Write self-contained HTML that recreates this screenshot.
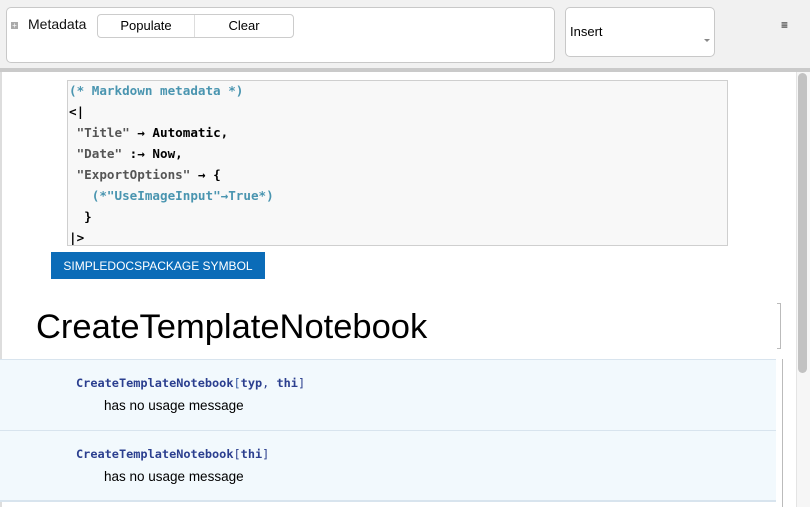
<!DOCTYPE html>
<html><head><style>
body{margin:0;width:810px;height:507px;overflow:hidden;background:#fff;font-family:"Liberation Sans",sans-serif;position:relative}
.a{position:absolute}
.mono{font-family:"DejaVu Sans Mono","Liberation Mono",monospace;font-size:11.9px}
</style></head><body>
<div class="a" style="left:0;top:0;width:810px;height:68px;background:#f1f1f1"></div>
<div class="a" style="left:0;top:68px;width:810px;height:4px;background:#cacaca"></div>
<div class="a" style="left:6px;top:7px;width:547px;height:54px;background:#fff;border:1px solid #c8c8c8;border-radius:5px"></div>
<div class="a" style="left:11px;top:22px;width:7px;height:7px;background:#aaa;color:#fff;font-size:8px;line-height:7px;text-align:center">+</div>
<div class="a" style="left:28px;top:16px;font-size:14px;color:#111">Metadata</div>
<div class="a" style="left:97px;top:14px;width:195px;height:22px;border:1px solid #ccc;border-radius:4px;background:#fff"></div>
<div class="a" style="left:194px;top:15px;width:1px;height:22px;background:#ddd"></div>
<div class="a" style="left:97px;top:18px;width:98px;text-align:center;font-size:13px">Populate</div>
<div class="a" style="left:195px;top:18px;width:98px;text-align:center;font-size:13px">Clear</div>
<div class="a" style="left:565px;top:7px;width:148px;height:48px;background:#fff;border:1px solid #c8c8c8;border-radius:5px"></div>
<div class="a" style="left:570px;top:24px;font-size:13px">Insert</div>
<div class="a" style="left:704px;top:39px;width:0;height:0;border-left:3px solid transparent;border-right:3px solid transparent;border-top:3px solid #888"></div>
<div class="a" style="left:781px;top:18px;font-size:12px">≡</div>
<div class="a" style="left:796px;top:72px;width:14px;height:435px;background:#f6f6f6;border-left:1px solid #e4e4e4"></div>
<div class="a" style="left:798px;top:73px;width:9px;height:300px;background:#c2c2c2;border-radius:5px"></div>
<div class="a" style="left:0;top:72px;width:2px;height:435px;background:#ddd"></div>
<div class="a" style="left:67px;top:80px;width:659px;height:164px;background:#f8f8f8;border:1px solid #cfcfcf"></div>
<div class="a mono" style="left:69px;top:80px;line-height:21px;color:#000;font-weight:bold;white-space:pre;font-size:12.6px"><span style="color:#4a95b0">(* Markdown metadata *)</span>
&lt;|
 <span style="color:#555">"Title"</span> → Automatic,
 <span style="color:#555">"Date"</span> :→ Now,
 <span style="color:#555">"ExportOptions"</span> → {
   <span style="color:#4a95b0">(*"UseImageInput"→True*)</span>
  }
|&gt;</div>
<div class="a" style="left:51px;top:252px;width:214px;height:27px;background:#0b6cb8;color:#fff;font-size:12px;line-height:29px;text-align:center">SIMPLEDOCSPACKAGE SYMBOL</div>
<div class="a" style="left:36px;top:308px;font-size:34.5px;color:#000">CreateTemplateNotebook</div>
<div class="a" style="left:777px;top:303px;width:3px;height:44px;border:1px solid #bbb;border-left:none"></div>
<div class="a" style="left:0;top:359px;width:776px;height:71px;background:#f2f9fd;border-top:1px solid #d8e4ee"></div>
<div class="a" style="left:0;top:430px;width:776px;height:69px;background:#f2f9fd;border-top:1px solid #d8e4ee;border-bottom:2px solid #d8e4ee"></div>
<div class="a" style="left:782px;top:359px;width:1px;height:148px;background:#bbb"></div>
<div class="a mono" style="left:76px;top:376px;color:#2b3f8f;font-weight:bold">CreateTemplateNotebook<span style="color:#3a5fa8;font-weight:normal">[</span>typ<span style="font-weight:normal">, </span>thi<span style="font-weight:normal">]</span></div>
<div class="a" style="left:104px;top:398px;font-size:13.5px">has no usage message</div>
<div class="a mono" style="left:76px;top:447px;color:#2b3f8f;font-weight:bold">CreateTemplateNotebook<span style="font-weight:normal">[</span>thi<span style="font-weight:normal">]</span></div>
<div class="a" style="left:104px;top:469px;font-size:13.5px">has no usage message</div>
</body></html>
